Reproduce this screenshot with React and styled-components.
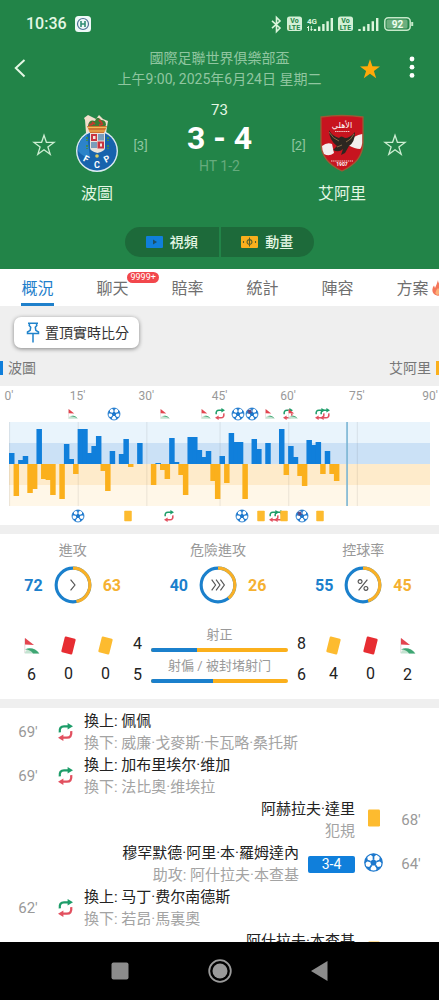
import React from "react";
import styled, { createGlobalStyle, css } from "styled-components";

const BLUE = "#107fdb";
const ORANGE = "#fbb01c";

const GlobalStyle = createGlobalStyle`
  * { box-sizing: border-box; }
  body {
    margin: 0;
    font-family: Roboto, "Noto Sans CJK TC", sans-serif;
    color: #222;
    background: #fff;
  }
  button { font: inherit; color: inherit; border: 0; background: none; padding: 0; cursor: pointer; }
  a { color: inherit; text-decoration: none; }
  h1, h2, p, ul { margin: 0; padding: 0; font-weight: 400; }
  svg { display: block; flex: none; overflow: visible; }
`;

const Screen = styled.div`
  display: flex;
  flex-direction: column;
  height: 100vh;
  overflow: hidden;
`;

const Content = styled.main`
  flex: 1;
  min-height: 0;
  overflow-y: auto;
  overflow-x: hidden;
  scrollbar-width: none;
`;

/* ---------- header ---------- */

const Header = styled.header`
  background: #228448;
  color: #e4f7e4;
  padding-bottom: 12px;
`;

const StatusBar = styled.div`
  display: flex;
  align-items: center;
  height: 48px;
  padding: 0 25px 0 26px;
`;

const Clock = styled.span`
  font-size: 16px;
  font-weight: 500;
  line-height: 20px;
  margin-right: 8px;
`;

const StatusIcons = styled.div`
  display: flex;
  align-items: center;
  gap: 5px;
  margin-left: auto;
`;

const AppBar = styled.div`
  display: grid;
  grid-template-columns: 84px 1fr 84px;
  align-items: center;
  padding: 0 8px;
`;

const IconButton = styled.button`
  display: flex;
  align-items: center;
  justify-content: center;
  width: 24px;
  height: 42px;
`;

const AppActions = styled.div`
  display: flex;
  justify-content: flex-end;
  gap: 18px;
  padding-right: 7px;
`;

const Competition = styled.h1`
  text-align: center;
  font-size: 14px;
  line-height: 21px;
  white-space: nowrap;
  color: #90c6a0;
`;

const Match = styled.section`
  display: grid;
  grid-template-columns: 46px 60px 27px 1fr 27px 60px 46px;
  padding: 10px 21px 0;
`;

const SideCell = styled.div`
  display: flex;
  align-items: center;
  justify-content: center;
  height: 90px;
  font-size: 13px;
  color: #90c6a0;
`;

const Team = styled.div`
  display: flex;
  flex-direction: column;
  align-items: center;
  gap: 9px;
  padding-top: 15px;
  font-size: 16px;
  line-height: 24px;
  white-space: nowrap;
`;

const ScoreBox = styled.div`
  text-align: center;
  white-space: nowrap;
`;

const Minute = styled.p`
  font-size: 15px;
  line-height: 20px;
`;

const Score = styled.p`
  font-size: 32px;
  font-weight: 700;
  line-height: 36px;
  color: #fff;
`;

const HalfTime = styled.p`
  font-size: 14px;
  line-height: 20px;
  color: #66ab7d;
`;

const MediaSwitch = styled.div`
  display: grid;
  grid-template-columns: 1fr 1fr;
  gap: 2px;
  width: 189px;
  height: 30px;
  margin: 21px auto 0;
  border-radius: 15px;
  overflow: hidden;
`;

const MediaButton = styled.button`
  display: flex;
  align-items: center;
  justify-content: center;
  gap: 7px;
  background: #1d6a3a;
  font-size: 14px;
  font-weight: 500;
  line-height: 20px;
`;

/* ---------- tabs ---------- */

const Tabs = styled.nav`
  display: flex;
  height: 37px;
  overflow: hidden;
  background: #fff;
`;

const Tab = styled.a`
  display: flex;
  justify-content: center;
  flex: 0 0 75px;
  font-size: 16px;
  line-height: 40px;
  color: ${(p) => (p.$active ? "#1f80cb" : "#6f6f6f")};
`;

const TabLabel = styled.span`
  position: relative;
  height: 37px;
  ${(p) => p.$active && css`box-shadow: inset 0 -3px 0 #1f80cb;`}
`;

const TabBadge = styled.span`
  position: absolute;
  left: 31px;
  top: 3px;
  padding: 0 3px;
  border-radius: 6px;
  background: #f2474c;
  color: #fff;
  font-size: 9px;
  line-height: 11px;
`;

const TabFlame = styled.span`
  position: absolute;
  left: 36px;
  top: 11px;
`;

/* ---------- momentum ---------- */

const PinArea = styled.section`
  padding: 11px 0 8px;
  background: #efefef;
`;

const PinButton = styled.button`
  display: flex;
  align-items: center;
  gap: 5px;
  height: 31px;
  margin-left: 14px;
  padding: 0 10px 0 12px;
  border-radius: 7px;
  background: #fff;
  box-shadow: 0 1px 4px rgba(0, 0, 0, 0.45);
  font-size: 14px;
  line-height: 20px;
  color: #333;
`;

const TeamLabels = styled.div`
  display: flex;
  justify-content: space-between;
  margin-top: 10px;
`;

const TeamLabel = styled.span`
  display: flex;
  align-items: center;
  gap: 5px;
  flex-direction: ${(p) => (p.$away ? "row-reverse" : "row")};
  font-size: 14px;
  line-height: 20px;
  color: #777;
  &::before {
    content: "";
    width: 3px;
    height: 14px;
    background: ${(p) => (p.$away ? ORANGE : BLUE)};
  }
`;

const Momentum = styled.section`
  padding: 0 9px;
`;

const Track = styled.div`
  position: relative;
  height: ${(p) => p.$height}px;
`;

const Slot = styled.span`
  position: absolute;
  top: 50%;
  left: ${(p) => (p.$at / 92) * 100}%;
  transform: translate(-50%, -50%);
  font-size: 12px;
  line-height: 16px;
  color: #999;
`;

const Divider = styled.hr`
  height: 9px;
  margin: 0;
  border: 0;
  background: #efefef;
`;

/* ---------- statistics ---------- */

const Stats = styled.section`
  padding: 6px 0 16px;
`;

const Gauges = styled.div`
  display: grid;
  grid-template-columns: repeat(3, 1fr);
  padding-right: 3px;
`;

const Gauge = styled.div`
  display: flex;
  flex-direction: column;
  align-items: center;
  gap: 5px;
  font-size: 14px;
  line-height: 21px;
  color: #999;
`;

const GaugeRow = styled.div`
  display: flex;
  align-items: center;
  gap: 11px;
`;

const GaugeValue = styled.strong`
  font-size: 16px;
  font-weight: 700;
  color: ${(p) => (p.$away ? "#f5b131" : "#1b80cc")};
`;

const Tally = styled.div`
  display: flex;
  height: 59px;
  margin-top: 20px;
  padding: 0 13px;
`;

const TallyColumn = styled.div`
  display: flex;
  flex-direction: column;
  align-items: center;
  flex: none;
  width: ${(p) => (p.$narrow ? 27 : 37)}px;
  padding-top: ${(p) => (p.$narrow ? 10 : 13)}px;
  gap: ${(p) => (p.$narrow ? 11 : 10)}px;
  font-size: 16px;
  line-height: 20px;
`;

const Shots = styled.div`
  flex: 1;
  min-width: 0;
`;

const Shot = styled.div`
  height: 31px;
  text-align: center;
  font-size: 13px;
  line-height: 22px;
  white-space: nowrap;
  color: #999;
`;

const ShotBar = styled.div`
  display: grid;
  grid-template-columns: ${(p) => `${p.$home}fr ${p.$away}fr`};
  height: 4px;
  margin-top: 2px;
  border-radius: 2px;
  overflow: hidden;
  background: ${ORANGE};
  &::before {
    content: "";
    background: #1b80cc;
  }
`;

/* ---------- timeline ---------- */

const Timeline = styled.ul`
  list-style: none;
  padding: 2px 0 0;
`;

const Event = styled.li`
  display: flex;
  align-items: center;
  flex-direction: ${(p) => (p.$away ? "row-reverse" : "row")};
  height: 44px;
  text-align: ${(p) => (p.$away ? "right" : "left")};
`;

const EventMinute = styled.span`
  width: 56px;
  text-align: center;
  font-size: 15px;
  line-height: 20px;
  color: #999;
`;

const EventIcon = styled.span`
  display: flex;
  justify-content: center;
  width: 19px;
  margin-bottom: ${(p) => (p.$away ? 4 : 0)}px;
`;

const EventText = styled.div`
  align-self: flex-start;
  margin: 0 9px;
  font-size: 15px;
  line-height: 22px;
  white-space: nowrap;
  color: #222;
`;

const EventDetail = styled.p`
  color: #a3a3a3;
`;

const ScoreTag = styled.span`
  width: 47px;
  margin-right: 9px;
  border-radius: 2px;
  background: ${BLUE};
  color: #fff;
  text-align: center;
  font-size: 14px;
  line-height: 17px;
`;

/* ---------- system bar ---------- */

const SystemBar = styled.nav`
  display: grid;
  grid-template-columns: repeat(3, 100px);
  justify-content: center;
  flex: none;
  height: 58px;
  background: #000;
`;

const SystemButton = styled.button`
  display: flex;
  align-items: center;
  justify-content: center;
`;

/* ---------- icons ---------- */

const Star = ({ filled }) => (
  <svg width="22" height="22" viewBox="0 0 22 22">
    <path
      d="M11 1.2 L13.4 8.3 L21 8.4 L14.9 12.9 L17.2 20.3 L11 15.8 L4.8 20.3 L7.1 12.9 L1 8.4 L8.6 8.3Z"
      fill={filled ? "#ffa90a" : "none"}
      stroke={filled ? "none" : "#cdeed2"}
      strokeWidth="1.3"
    />
  </svg>
);

const Ball = ({ size = 19, marked }) => (
  <svg width={size} height={size} viewBox="0 0 20 20">
    <circle cx="10" cy="10" r="9.2" fill="#fff" stroke="#1c78cd" strokeWidth="1.3" />
    <path d="M10 6.2 L13.6 8.9 L12.3 13.1 H7.7 L6.4 8.9Z" fill="#1c78cd" />
    <path
      d="M10 6.6V3.6 M13.3 9L16.6 7.9 M12 12.8L14 15.6 M8 12.8L6 15.6 M6.7 9L3.4 7.9"
      stroke="#1c78cd"
      strokeWidth="1.8"
    />
    <path
      d="M6.4 1.4 L10 4.4 L13.6 1.4 Q10 .4 6.4 1.4Z M15.8 8.2 L19 11 Q19.2 6.4 16.8 3.6Z M13.2 14.9 L12.8 18.6 Q16.6 17 18.2 14Z M6.8 14.9 L7.2 18.6 Q3.4 17 1.8 14Z M4.2 8.2 L1 11 Q.8 6.4 3.2 3.6Z"
      fill="#1c78cd"
    />
    {marked && <path d="M3 4 L8 3 L10 8 L5 10Z" fill="#5b4e86" />}
  </svg>
);

const Substitution = ({ width = 15, height = 18 }) => (
  <svg width={width} height={height} viewBox="0 0 15 18">
    <path d="M1.8 9.4 C1.2 5 3 3.3 6 3.3 H10.5" fill="none" stroke="#1d9d69" strokeWidth="2.3" />
    <path d="M9.6 0 L15 3.3 L9.6 6.6Z" fill="#1d9d69" />
    <path d="M13.2 8.2 C13.8 13 12 14.7 9 14.7 H4.5" fill="none" stroke="#e2505f" strokeWidth="2.3" />
    <path d="M5.4 11.4 L0 14.7 L5.4 18Z" fill="#e2505f" />
  </svg>
);

const Corner = ({ width = 16, height = 18, flip }) => (
  <svg width={width} height={height} viewBox="0 0 16 18">
    <path d="M.8 1.4V16" stroke="#d9cfd0" strokeWidth=".8" />
    <path d="M1 1 L10 8 L1 7.6Z" fill="#e3454f" />
    <path d="M.6 16.6 C2 10 11 9.6 15.6 16.6Z" fill="#c4e3d1" />
    <path
      d={flip ? "M1 12.4 C6 10 12 12 15.2 16.4 H9 C8 14 5 12.6 1 12.4Z" : "M4.4 13 C8 10.8 12 12 15.2 16.2 C12 13.8 8.6 13 4.4 13Z"}
      fill="#3ea673"
    />
  </svg>
);

const Card = ({ color = "#fdbb2f", width = 16, height = 18, tilt = 0 }) => (
  <svg width={width} height={height} viewBox="0 0 16 18" preserveAspectRatio="none">
    <rect x="2" y=".5" width="12" height="17" rx="1.2" fill={color} transform={`rotate(${tilt} 8 9)`} />
  </svg>
);

const SignalBars = () => (
  <svg width="21" height="15" viewBox="0 0 21 15">
    <path d="M1.5 14V12 M6 14V9.6 M10.4 14V7 M14.8 14V4.2 M19.2 14V1" stroke="#dcf5dc" strokeWidth="2.4" />
  </svg>
);

const VolteIcon = () => (
  <svg width="15" height="16" viewBox="0 0 15 16">
    <rect y=".5" width="15" height="14.5" rx="2.5" fill="#d3f0d6" />
    <text x="7.5" y="7.4" textAnchor="middle" fontSize="7" fontWeight="700" fill="#228448">Vo</text>
    <text x="7.5" y="13.8" textAnchor="middle" fontSize="7" fontWeight="700" fill="#228448">LTE</text>
  </svg>
);

const PortoCrest = () => (
  <svg width="44" height="58" viewBox="0 0 44 58">
    <path d="M11 18 L10 5 L9 3 L13 0 L17 2 L21 4 L24 0 L28 4 L33 6 L31 18Z" fill="#f2dfcc" />
    <path d="M13 11 Q14 4 20 6 Q22 0 26 5 Q31 5 31 10 L29 13 H15Z" fill="#3c7c34" />
    <path d="M17 7l3 2 M24 5l3 3 M28 9l-4 1 M14 10l4 -1" stroke="#c5392f" strokeWidth="2" />
    <circle cx="22" cy="36" r="21" fill="#dceaf2" />
    <circle cx="22" cy="36" r="19.6" fill="#1763ad" />
    <path d="M3 36 A19 19 0 0 1 12 19.5 L15 43 Q8 42 3 36Z" fill="#2c83c9" />
    <path d="M12 11 H32 L29 18 H15Z" fill="#cf7331" />
    <path d="M13 12.5H31 M14 16H30" stroke="#f3bd58" strokeWidth="1.2" />
    <path d="M15 18 H30 V33 Q30 36 22.5 38 Q15 36 15 33Z" fill="#e9e3dc" />
    <path d="M16 19h6v7h-6z M22.5 26.5h6.500v7h-6.500z" fill="#c93441" />
    <path d="M23 19h6v6.500h-6z M16 27h6v6h-6z" fill="#7b9dbb" />
    <path d="M18 21h2.500v3h-2.500z M25 28.500h2v3h-2z" fill="#f1e9df" />
    <path d="M12 22v4 M33 22v4 M12 30v4 M33 30v4" stroke="#3f8b55" strokeWidth="2" strokeDasharray="2 1" />
    <circle cx="22" cy="41" r="1.8" fill="#dccb61" />
    <g fill="#fff" fontSize="9" fontWeight="700" textAnchor="middle">
      <text x="11" y="47" transform="rotate(28 11 44)">F</text>
      <text x="22" y="53">C</text>
      <text x="32" y="47" transform="rotate(-28 32 44)">P</text>
    </g>
  </svg>
);

const AhlyCrest = () => (
  <svg width="46" height="58" viewBox="0 0 46 58">
    <path d="M2 2 Q23 -1 44 2 V28 C44 42 36 50 23 56 C10 50 2 42 2 28Z" fill="#c7141f" stroke="#9b5a34" strokeWidth="1.3" />
    <path d="M3 31 Q8 27 13 29 L15 38 Q10 42 5 39 Q3 35 3 31Z" fill="#f3eeee" />
    <path d="M29 28 Q35 20 43.200 19 V28 Q42.500 33 41 34 Q36 34 29 30Z" fill="#f3eeee" />
    <path d="M10 15 Q10 25 18 31 L14 35 Q20 38 24 34 L22 40 L26 38 L30 31 Q36 27 36 17 Q31 23 26 23 Q22 20 20 23 Q13 21 10 15Z" fill="#2c2620" />
    <path d="M10 17 Q14 24 20 26 M35 19 Q32 25 27 27 M18 32l5 -2" stroke="#927349" strokeWidth=".9" fill="none" />
    <text x="23" y="13" textAnchor="middle" fontSize="8" fill="#fff" fontFamily="DejaVu Sans">الأهلي</text>
    <path d="M16 16.500H31 M12 46H34" stroke="#efc6c6" strokeWidth="1" strokeDasharray="1.500 .6" />
    <text x="23" y="51" textAnchor="middle" fontSize="5" fontWeight="700" fill="#fff">1907</text>
  </svg>
);

/* ---------- data ---------- */

const tabs = [
  { label: "概況", active: true },
  { label: "聊天", badge: "9999+" },
  { label: "賠率" },
  { label: "統計" },
  { label: "陣容" },
  { label: "方案", flame: true },
];

const axis = [[0, "0'"], [15, "15'"], [30, "30'"], [46, "45'"], [61, "60'"], [76, "75'"], [92, "90'"]];

const homePressure = {
  0: 11, 2: 4, 3: 8, 6: 35, 12: 20, 13: 5, 15: 35, 16: 35, 17: 11, 18: 18, 19: 28, 22: 13, 24: 10, 25: 25,
  28: 21, 32: 1, 35: 26, 36: 2, 39: 27, 40: 27, 41: 14, 42: 7, 43: 13, 46: 8, 48: 31, 49: 22, 50: 22, 53: 25,
  54: 15, 56: 21, 59: 35, 61: 18, 62: 7, 65: 24, 66: 19, 67: 22, 69: 13,
};

const awayPressure = {
  1: 32, 4: 29, 5: 25, 7: 15, 8: 16, 9: 31, 11: 35, 14: 10, 20: 7, 21: 27, 26: 3, 31: 21, 33: 6, 34: 15, 37: 11,
  38: 31, 44: 17, 45: 35, 47: 19, 51: 35, 60: 11, 63: 12, 64: 22, 68: 10, 70: 10, 71: 17,
};

const homeMarkers = [
  [14, "corner"], [23, "goal"], [34, "corner"], [43, "corner"], [46, "sub"], [50, "goal"], [53, "penalty"],
  [57, "corner"], [61, "sub"], [62, "corner"], [68, "sub"], [69, "sub"],
];

const awayMarkers = [
  [15, "goal"], [26, "card"], [35, "sub"], [51, "goal"], [55, "card"], [58, "sub"], [59, "sub"], [60, "card"],
  [64, "penalty"], [68, "card"],
];

const markerIcons = {
  corner: <Corner width={10} height={12} />,
  goal: <Ball size={13} />,
  penalty: <Ball size={13} marked />,
  sub: <Substitution width={10} height={12} />,
  card: <Card width={10} height={11} />,
};

const gauges = [
  { label: "進攻", home: 72, away: 63, icon: <path d="M17 14 L21.500 19.500 L17 25" /> },
  { label: "危險進攻", home: 40, away: 26, icon: <path d="M13 14 L17 19.500 L13 25 M17.500 14 L21.500 19.500 L17.500 25 M22 14 L26 19.500 L22 25" /> },
  { label: "控球率", home: 55, away: 45, icon: <path d="M24 14 L15 25 M16.500 14a2 2 0 1 0 .01 0Z M22.500 21a2 2 0 1 0 .01 0Z" /> },
];

const shots = [
  { label: "射正", home: 4, away: 8 },
  { label: "射偏 / 被封堵射门", home: 5, away: 6 },
];

const eventIcons = { sub: <Substitution />, card: <Card />, goal: <Ball size={19} /> };

const events = [
  { minute: "69'", icon: "sub", title: "換上: 佩佩", detail: "換下: 威廉·戈麥斯·卡瓦略·桑托斯" },
  { minute: "69'", icon: "sub", title: "換上: 加布里埃尔·维加", detail: "換下: 法比奧·维埃拉" },
  { minute: "68'", icon: "card", away: true, title: "阿赫拉夫·達里", detail: "犯規" },
  { minute: "64'", icon: "goal", away: true, score: "3-4", title: "穆罕默德·阿里·本·羅姆達內", detail: "助攻: 阿什拉夫·本查基" },
  { minute: "62'", icon: "sub", title: "換上: 马丁·费尔南德斯", detail: "換下: 若昂·馬裏奧" },
  { icon: "card", away: true, title: "阿什拉夫·本查基" },
];

/* ---------- sections ---------- */

function PressureChart() {
  const minutes = 92;
  return (
    <svg width="100%" height="84" viewBox={`0 0 ${minutes} 84`} preserveAspectRatio="none" role="img" aria-label="進攻走勢">
      <rect width={minutes} height="21" fill="#e9f4fc" />
      <rect y="21" width={minutes} height="21" fill="#cbe1f6" />
      <rect y="42" width={minutes} height="21" fill="#feebcb" />
      <rect y="63" width={minutes} height="21" fill="#fff7e8" />
      {axis.slice(0, 6).map(([at]) => (
        <rect key={at} x={at} width=".25" height="84" fill="#000" opacity=".07" />
      ))}
      {Object.entries(homePressure).map(([at, value]) => (
        <rect key={at} x={at} y={42 - value} width="1.2" height={value} fill={BLUE} />
      ))}
      {Object.entries(awayPressure).map(([at, value]) => (
        <rect key={at} x={at} y="42" width="1.2" height={value} fill={ORANGE} />
      ))}
      <rect x="73.700" width=".35" height="84" fill="#79b4d3" />
    </svg>
  );
}

function Ring({ home, away, icon }) {
  const share = (away / (home + away)) * 100;
  return (
    <svg width="38" height="38" viewBox="0 0 39 39">
      <g fill="none" strokeWidth="3.2" transform="rotate(-90 19.5 19.5)">
        <circle cx="19.500" cy="19.500" r="17.300" stroke="#1b80cc" />
        <circle cx="19.500" cy="19.500" r="17.300" stroke="#f9b027" pathLength="100" strokeDasharray={`${share} 100`} />
      </g>
      <g fill="none" stroke="#555" strokeWidth="1.2">{icon}</g>
    </svg>
  );
}

function Markers({ items, height }) {
  return (
    <Track $height={height}>
      {items.map(([at, kind], i) => (
        <Slot key={i} $at={at}>{markerIcons[kind]}</Slot>
      ))}
    </Track>
  );
}

export default function App() {
  return (
    <Screen>
      <GlobalStyle />
      <Content>
        <Header>
          <StatusBar>
            <Clock>10:36</Clock>
            <svg width="16" height="16" viewBox="0 0 16 16">
              <rect width="16" height="16" rx="3.5" fill="#eef8f7" />
              <circle cx="8" cy="8" r="5.500" fill="none" stroke="#4d7095" strokeWidth="1.2" />
              <path d="M6 5v6 M10 5v6 M6 8h4" stroke="#2f8c74" strokeWidth="1.6" />
            </svg>
            <StatusIcons>
              <svg width="11" height="17" viewBox="0 0 11 17" fill="none" stroke="#dcf5dc" strokeWidth="1.6">
                <path d="M1 4.800 L9 12 L5.500 15.600 V1.400 L9 5 L1 12.200" />
              </svg>
              <VolteIcon />
              <svg width="26" height="17" viewBox="0 0 26 17">
                <text x="0" y="7.500" fontSize="8" fontWeight="700" fill="#dcf5dc">4G</text>
                <path d="M1.500 15V10 M4.300 10v5 M0 11.500h2 M3.500 13.500h2" stroke="#dcf5dc" strokeWidth="1" />
                <path d="M8 15V13 M12.200 15V10.600 M16.400 15V8 M20.600 15V5.200 M24.800 15V2" stroke="#dcf5dc" strokeWidth="2.400" />
              </svg>
              <VolteIcon />
              <SignalBars />
              <svg width="30" height="14" viewBox="0 0 30 14">
                <rect x=".8" y=".8" width="25.400" height="12.400" rx="3.500" fill="none" stroke="#c5e8c9" strokeWidth="1.500" />
                <rect x="2.500" y="2.500" width="21" height="9" rx="1.500" fill="#6cae7e" />
                <path d="M28.200 5v4" stroke="#c5e8c9" strokeWidth="2" />
                <text x="13.500" y="10.800" textAnchor="middle" fontSize="10" fontWeight="700" fill="#f0fff0">92</text>
              </svg>
            </StatusIcons>
          </StatusBar>

          <AppBar>
            <IconButton aria-label="返回">
              <svg width="12" height="20" viewBox="0 0 12 20" fill="none" stroke="#e4f7e4" strokeWidth="2">
                <path d="M10.500 1 L1.800 9 L10.500 17.500" />
              </svg>
            </IconButton>
            <Competition>
              國際足聯世界俱樂部盃
              <br />
              上午9:00, 2025年6月24日 星期二
            </Competition>
            <AppActions>
              <IconButton aria-label="收藏比賽"><Star filled /></IconButton>
              <IconButton aria-label="更多">
                <svg width="6" height="22" viewBox="0 0 6 22" fill="#fff">
                  <circle cx="3" cy="1" r="2.400" />
                  <circle cx="3" cy="9.200" r="2.400" />
                  <circle cx="3" cy="17.400" r="2.400" />
                </svg>
              </IconButton>
            </AppActions>
          </AppBar>

          <Match>
            <SideCell><IconButton aria-label="收藏波圖"><Star /></IconButton></SideCell>
            <Team><PortoCrest />波圖</Team>
            <SideCell>[3]</SideCell>
            <ScoreBox>
              <Minute>73</Minute>
              <Score>3 - 4</Score>
              <HalfTime>HT 1-2</HalfTime>
            </ScoreBox>
            <SideCell>[2]</SideCell>
            <Team><AhlyCrest />艾阿里</Team>
            <SideCell><IconButton aria-label="收藏艾阿里"><Star /></IconButton></SideCell>
          </Match>

          <MediaSwitch>
            <MediaButton>
              <svg width="17" height="12" viewBox="0 0 17 12">
                <rect width="17" height="12" rx="1" fill={BLUE} />
                <path d="M7 3.500 L11 6 L7 8.500Z" fill="#1d4f63" />
              </svg>
              視頻
            </MediaButton>
            <MediaButton>
              <svg width="17" height="12" viewBox="0 0 17 12">
                <rect width="17" height="12" rx="1" fill="#f9b01d" />
                <path d="M8.500 1.500v9 M8.500 3.600a2.400 2.400 0 1 0 .01 0 M2.500 5v2 M14.500 5v2" fill="none" stroke="#55602a" strokeWidth="1.100" />
              </svg>
              動畫
            </MediaButton>
          </MediaSwitch>
        </Header>

        <Tabs>
          {tabs.map((tab) => (
            <Tab key={tab.label} href="#" $active={tab.active}>
              <TabLabel $active={tab.active}>
                {tab.label}
                {tab.badge && <TabBadge>{tab.badge}</TabBadge>}
                {tab.flame && (
                  <TabFlame>
                    <svg width="12" height="16" viewBox="0 0 12 16">
                      <path d="M6 0 Q6 3 9 6 Q12 10 10 13 Q8 16 5 15.600 Q0 14 .4 9.500 Q.6 7 2 5.500 L3 8 Q5 4 6 0Z" fill="#f4765a" />
                      <path d="M6 8 Q9 11 7.500 14 Q5 16 3.500 13.500 Q3 11 6 8Z" fill="#fcb17a" />
                    </svg>
                  </TabFlame>
                )}
              </TabLabel>
            </Tab>
          ))}
        </Tabs>

        <PinArea>
          <PinButton>
            <svg width="14" height="21" viewBox="0 0 14 21" fill="none" stroke="#2083cb" strokeWidth="1.500">
              <path d="M2 1.200 H12 M3.600 1.200 L3.200 3.600 L4.700 5.200 L4.200 8.400 L1.500 10 V11.600 H12.500 V10 L9.800 8.400 L9.300 5.200 L10.800 3.600 L10.400 1.200 M7 11.600 V20.500" />
            </svg>
            置頂實時比分
          </PinButton>
          <TeamLabels>
            <TeamLabel>波圖</TeamLabel>
            <TeamLabel $away>艾阿里</TeamLabel>
          </TeamLabels>
        </PinArea>

        <Momentum>
          <Track $height={20}>
            {axis.map(([at, label]) => <Slot key={label} $at={at}>{label}</Slot>)}
          </Track>
          <Markers items={homeMarkers} height={16} />
          <PressureChart />
          <Markers items={awayMarkers} height={19} />
        </Momentum>

        <Divider />

        <Stats>
          <Gauges>
            {gauges.map((g) => (
              <Gauge key={g.label}>
                {g.label}
                <GaugeRow>
                  <GaugeValue>{g.home}</GaugeValue>
                  <Ring {...g} />
                  <GaugeValue $away>{g.away}</GaugeValue>
                </GaugeRow>
              </Gauge>
            ))}
          </Gauges>
          <Tally>
            <TallyColumn><Corner flip /><span>6</span></TallyColumn>
            <TallyColumn><Card color="#e72d32" tilt={14} width={15} height={17} /><span>0</span></TallyColumn>
            <TallyColumn><Card tilt={14} width={15} height={17} /><span>0</span></TallyColumn>
            <TallyColumn $narrow>{shots.map((s) => <span key={s.label}>{s.home}</span>)}</TallyColumn>
            <Shots>
              {shots.map((s) => (
                <Shot key={s.label}>
                  {s.label}
                  <ShotBar $home={s.home} $away={s.away} />
                </Shot>
              ))}
            </Shots>
            <TallyColumn $narrow>{shots.map((s) => <span key={s.label}>{s.away}</span>)}</TallyColumn>
            <TallyColumn><Card tilt={14} width={15} height={17} /><span>4</span></TallyColumn>
            <TallyColumn><Card color="#e72d32" tilt={14} width={15} height={17} /><span>0</span></TallyColumn>
            <TallyColumn><Corner flip /><span>2</span></TallyColumn>
          </Tally>
        </Stats>

        <Divider />

        <Timeline>
          {events.map((e, i) => (
            <Event key={i} $away={e.away}>
              <EventMinute>{e.minute}</EventMinute>
              <EventIcon $away={e.away}>{eventIcons[e.icon]}</EventIcon>
              {e.score && <ScoreTag>{e.score}</ScoreTag>}
              <EventText>
                <p>{e.title}</p>
                {e.detail && <EventDetail>{e.detail}</EventDetail>}
              </EventText>
            </Event>
          ))}
        </Timeline>
      </Content>

      <SystemBar>
        <SystemButton aria-label="最近">
          <svg width="18" height="18" viewBox="0 0 18 18"><rect x=".5" y=".5" width="17" height="17" rx="2" fill="#8c8c8c" /></svg>
        </SystemButton>
        <SystemButton aria-label="主頁">
          <svg width="24" height="24" viewBox="0 0 24 24">
            <circle cx="12" cy="12" r="10.800" fill="none" stroke="#9a9a9a" strokeWidth="1.800" />
            <circle cx="12" cy="12" r="7.500" fill="#9a9a9a" />
          </svg>
        </SystemButton>
        <SystemButton aria-label="返回上一頁">
          <svg width="17" height="20" viewBox="0 0 17 20"><path d="M16.500 0 V20 L0 10Z" fill="#8c8c8c" /></svg>
        </SystemButton>
      </SystemBar>
    </Screen>
  );
}
